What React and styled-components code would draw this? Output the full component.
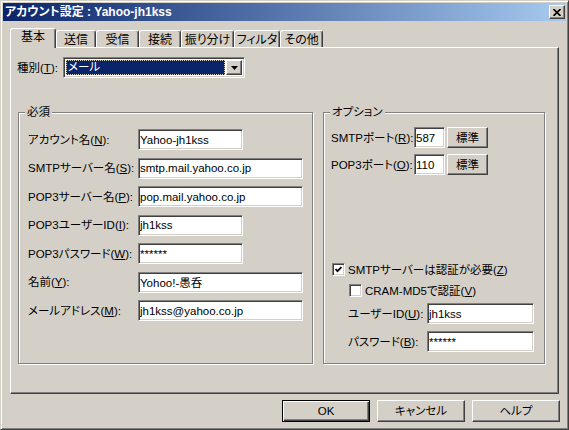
import React from 'react';
import styled, { createGlobalStyle, css } from 'styled-components';

const FONT = `"Liberation Sans", "Noto Sans CJK JP", sans-serif`;

const Global = createGlobalStyle`
  html, body { margin: 0; padding: 0; background: #d4d0c8; }
  body { font-family: ${FONT}; font-size: 12px; }
  * { box-sizing: border-box; }
`;

const sunken = css`
  border: 1px solid;
  border-color: #808080 #fff #fff #808080;
  box-shadow: inset 1px 1px #404040, inset -1px -1px #d4d0c8;
`;

const raised = css`
  border: 1px solid;
  border-color: #fff #404040 #404040 #fff;
  box-shadow: inset -1px -1px #808080;
`;

const Window = styled.div`
  width: 569px;
  height: 430px;
  background: #d4d0c8;
  border: 1px solid;
  border-color: #d4d0c8 #404040 #404040 #d4d0c8;
  box-shadow: inset 1px 1px #fff, inset -1px -1px #808080;
  padding: 2px;
  display: flex;
  flex-direction: column;
  font-family: ${FONT};
  font-size: 11.5px;
  color: #000;
  font-feature-settings: "palt";
`;

const TitleBar = styled.div`
  height: 18px;
  flex: none;
  display: flex;
  align-items: center;
  justify-content: space-between;
  padding-left: 2px;
  background: linear-gradient(to right, #0a246a, #a6caf0);
`;

const TitleText = styled.span`
  color: #fff;
  font-weight: bold;
  font-size: 12px;
  line-height: 14px;
  white-space: nowrap;
`;

const CloseButton = styled.div`
  width: 16px;
  height: 14px;
  margin-right: 1px;
  background: #d4d0c8;
  ${raised};
  display: flex;
  align-items: center;
  justify-content: center;
`;

const Body = styled.div`
  flex: 1;
  display: flex;
  flex-direction: column;
  padding: 7px 7px 0 7px;
`;

const TabStrip = styled.div`
  display: flex;
  align-items: flex-end;
  height: 19px;
  padding-left: 2px;
  position: relative;
  z-index: 1;
`;

const Tab = styled.div`
  width: ${(p) => p.$w}px;
  height: ${(p) => (p.$active ? 20 : 17)}px;
  margin-left: ${(p) => (p.$active ? -2 : 0)}px;
  margin-bottom: ${(p) => (p.$active ? -1 : 0)}px;
  background: #d4d0c8;
  border-top: 1px solid #fff;
  border-left: 1px solid #fff;
  border-right: 1px solid #404040;
  box-shadow: inset -1px 0 #808080;
  border-radius: 3px 3px 0 0;
  display: flex;
  align-items: center;
  justify-content: center;
  padding: ${(p) => (p.$active ? '0 0 3px' : '2px 0 0')};
  font-size: 12px;
  line-height: 14px;
  white-space: nowrap;
`;

const Panel = styled.div`
  height: 347px;
  flex: none;
  ${raised};
  padding-top: 9px;
  display: flex;
  flex-direction: column;
`;

const TypeRow = styled.div`
  display: flex;
  align-items: center;
  padding-left: 6px;
`;

const TypeLabel = styled.span`
  width: 46px;
  white-space: nowrap;
  line-height: 14px;
`;

const Combo = styled.div`
  width: 182px;
  height: 21px;
  ${sunken};
  background: #fff;
  display: flex;
  padding: 2px;
  gap: 1px;
`;

const ComboValue = styled.div`
  flex: 1;
  background: #0a246a;
  color: #fff;
  outline: 1px dotted #d4d0c8;
  outline-offset: -1px;
  padding-left: 2px;
  line-height: 15px;
`;

const ComboButton = styled.div`
  width: 16px;
  background: #d4d0c8;
  ${raised};
  display: flex;
  align-items: center;
  justify-content: center;
`;

const GroupRow = styled.div`
  display: flex;
  gap: 10px;
  margin-top: 34px;
  padding-left: 7px;
`;

const Group = styled.div`
  position: relative;
  width: ${(p) => p.$w}px;
  height: 252px;
  border: 1px solid #808080;
  box-shadow: inset 1px 1px #fff, 1px 1px #fff;
  padding: ${(p) => p.$pad};
`;

const Legend = styled.span`
  position: absolute;
  top: -8px;
  left: 6px;
  padding: 0 2px;
  background: #d4d0c8;
  line-height: 14px;
  white-space: nowrap;
`;

const FieldGrid = styled.div`
  display: grid;
  grid-template-columns: ${(p) => p.$label}px auto;
  row-gap: ${(p) => p.$gap}px;
  align-items: center;
  justify-items: start;
`;

const Label = styled.span`
  white-space: nowrap;
  line-height: 14px;
`;

const Field = styled.input`
  width: ${(p) => p.$w}px;
  height: 21px;
  ${sunken};
  background: #fff;
  font-family: ${FONT};
  font-size: 11.5px;
  font-feature-settings: "palt";
  color: #000;
  padding: 0 0 0 1px;
  margin: 0;
  outline: none;
`;

const PortCell = styled.div`
  display: flex;
  align-items: center;
  gap: 2px;
`;

const SmallButton = styled.div`
  width: 41px;
  height: 21px;
  ${raised};
  display: flex;
  align-items: center;
  justify-content: center;
  line-height: 14px;
`;

const AuthBlock = styled.div`
  margin-top: 88px;
  display: flex;
  flex-direction: column;
`;

const CheckRow = styled.div`
  display: flex;
  align-items: center;
  gap: 3px;
  margin-left: ${(p) => p.$indent}px;
  margin-top: ${(p) => p.$top}px;
  line-height: 14px;
  white-space: nowrap;
  height: 13px;
`;

const CheckBox = styled.div`
  width: 13px;
  height: 13px;
  flex: none;
  ${sunken};
  background: #fff;
  display: flex;
  align-items: center;
  justify-content: center;
`;

const AuthGrid = styled(FieldGrid)`
  margin-left: 17px;
  margin-top: 6px;
`;

const ButtonRow = styled.div`
  display: flex;
  justify-content: flex-end;
  gap: 7px;
  margin-top: 6px;
  margin-right: -1px;
`;

const DialogButton = styled.div`
  width: 88px;
  height: 22px;
  display: flex;
  align-items: center;
  justify-content: center;
  line-height: 14px;
  ${(p) =>
    p.$default
      ? css`
          border: 1px solid #000;
          box-shadow: inset 1px 1px #fff, inset -1px -1px #404040, inset -2px -2px #808080;
        `
      : raised};
`;

const Acc = ({ text, k, colon = true }) => (
  <Label>
    {text}(<u>{k}</u>){colon ? ':' : ''}
  </Label>
);

const tabs = [
  ['基本', 46],
  ['送信', 40],
  ['受信', 43],
  ['接続', 42],
  ['振り分け', 53],
  ['フィルタ', 46],
  ['その他', 43],
];

const required = [
  ['アカウント名', 'N', 'Yahoo-jh1kss', 105],
  ['SMTPサーバー名', 'S', 'smtp.mail.yahoo.co.jp', 165],
  ['POP3サーバー名', 'P', 'pop.mail.yahoo.co.jp', 165],
  ['POP3ユーザーID', 'I', 'jh1kss', 105],
  ['POP3パスワード', 'W', '******', 105],
  ['名前', 'Y', 'Yohoo!-愚呑', 165],
  ['メールアドレス', 'M', 'jh1kss@yahoo.co.jp', 165],
];

const ports = [
  ['SMTPポート', 'R', '587'],
  ['POP3ポート', 'O', '110'],
];

export default function App() {
  return (
    <>
      <Global />
      <Window>
        <TitleBar>
          <TitleText>アカウント設定 : Yahoo-jh1kss</TitleText>
          <CloseButton>
            <svg width="8" height="7" viewBox="0 0 8 7">
              <path d="M0.5 0 L7.5 7 M7.5 0 L0.5 7" stroke="#000" strokeWidth="1.6" />
            </svg>
          </CloseButton>
        </TitleBar>
        <Body>
          <TabStrip>
            {tabs.map(([t, w], i) => (
              <Tab key={t} $w={w} $active={i === 0}>
                {t}
              </Tab>
            ))}
          </TabStrip>
          <Panel>
            <TypeRow>
              <TypeLabel>
                種別(<u>T</u>):
              </TypeLabel>
              <Combo>
                <ComboValue>メール</ComboValue>
                <ComboButton>
                  <svg width="7" height="4" viewBox="0 0 7 4">
                    <path d="M0 0 H7 L3.5 4 Z" fill="#000" />
                  </svg>
                </ComboButton>
              </Combo>
            </TypeRow>
            <GroupRow>
              <Group $w={295} $pad="16px 0 0 9px">
                <Legend>必須</Legend>
                <FieldGrid $label={110} $gap={7.5}>
                  {required.map(([l, k, v, w]) => (
                    <React.Fragment key={l}>
                      <Acc text={l} k={k} />
                      <Field readOnly value={v} $w={w} />
                    </React.Fragment>
                  ))}
                </FieldGrid>
              </Group>
              <Group $w={222} $pad="14px 0 0 7px">
                <Legend>オプション</Legend>
                <FieldGrid $label={83} $gap={6}>
                  {ports.map(([l, k, v]) => (
                    <React.Fragment key={l}>
                      <Acc text={l} k={k} />
                      <PortCell>
                        <Field readOnly value={v} $w={31} />
                        <SmallButton>標準</SmallButton>
                      </PortCell>
                    </React.Fragment>
                  ))}
                </FieldGrid>
                <AuthBlock>
                  <CheckRow $indent={1} $top={0}>
                    <CheckBox>
                      <svg width="7" height="7" viewBox="0 0 7 7">
                        <path d="M0.5 3 L2.5 5.2 L6.5 1" stroke="#000" strokeWidth="1.8" fill="none" />
                      </svg>
                    </CheckBox>
                    <Acc text="SMTPサーバーは認証が必要" k="Z" colon={false} />
                  </CheckRow>
                  <CheckRow $indent={18} $top={8}>
                    <CheckBox />
                    <Acc text="CRAM-MD5で認証" k="V" colon={false} />
                  </CheckRow>
                  <AuthGrid $label={79} $gap={7}>
                    <Acc text="ユーザーID" k="U" />
                    <Field readOnly value="jh1kss" $w={107} />
                    <Acc text="パスワード" k="B" />
                    <Field readOnly value="******" $w={107} />
                  </AuthGrid>
                </AuthBlock>
              </Group>
            </GroupRow>
          </Panel>
          <ButtonRow>
            <DialogButton $default>OK</DialogButton>
            <DialogButton>キャンセル</DialogButton>
            <DialogButton>ヘルプ</DialogButton>
          </ButtonRow>
        </Body>
      </Window>
    </>
  );
}
